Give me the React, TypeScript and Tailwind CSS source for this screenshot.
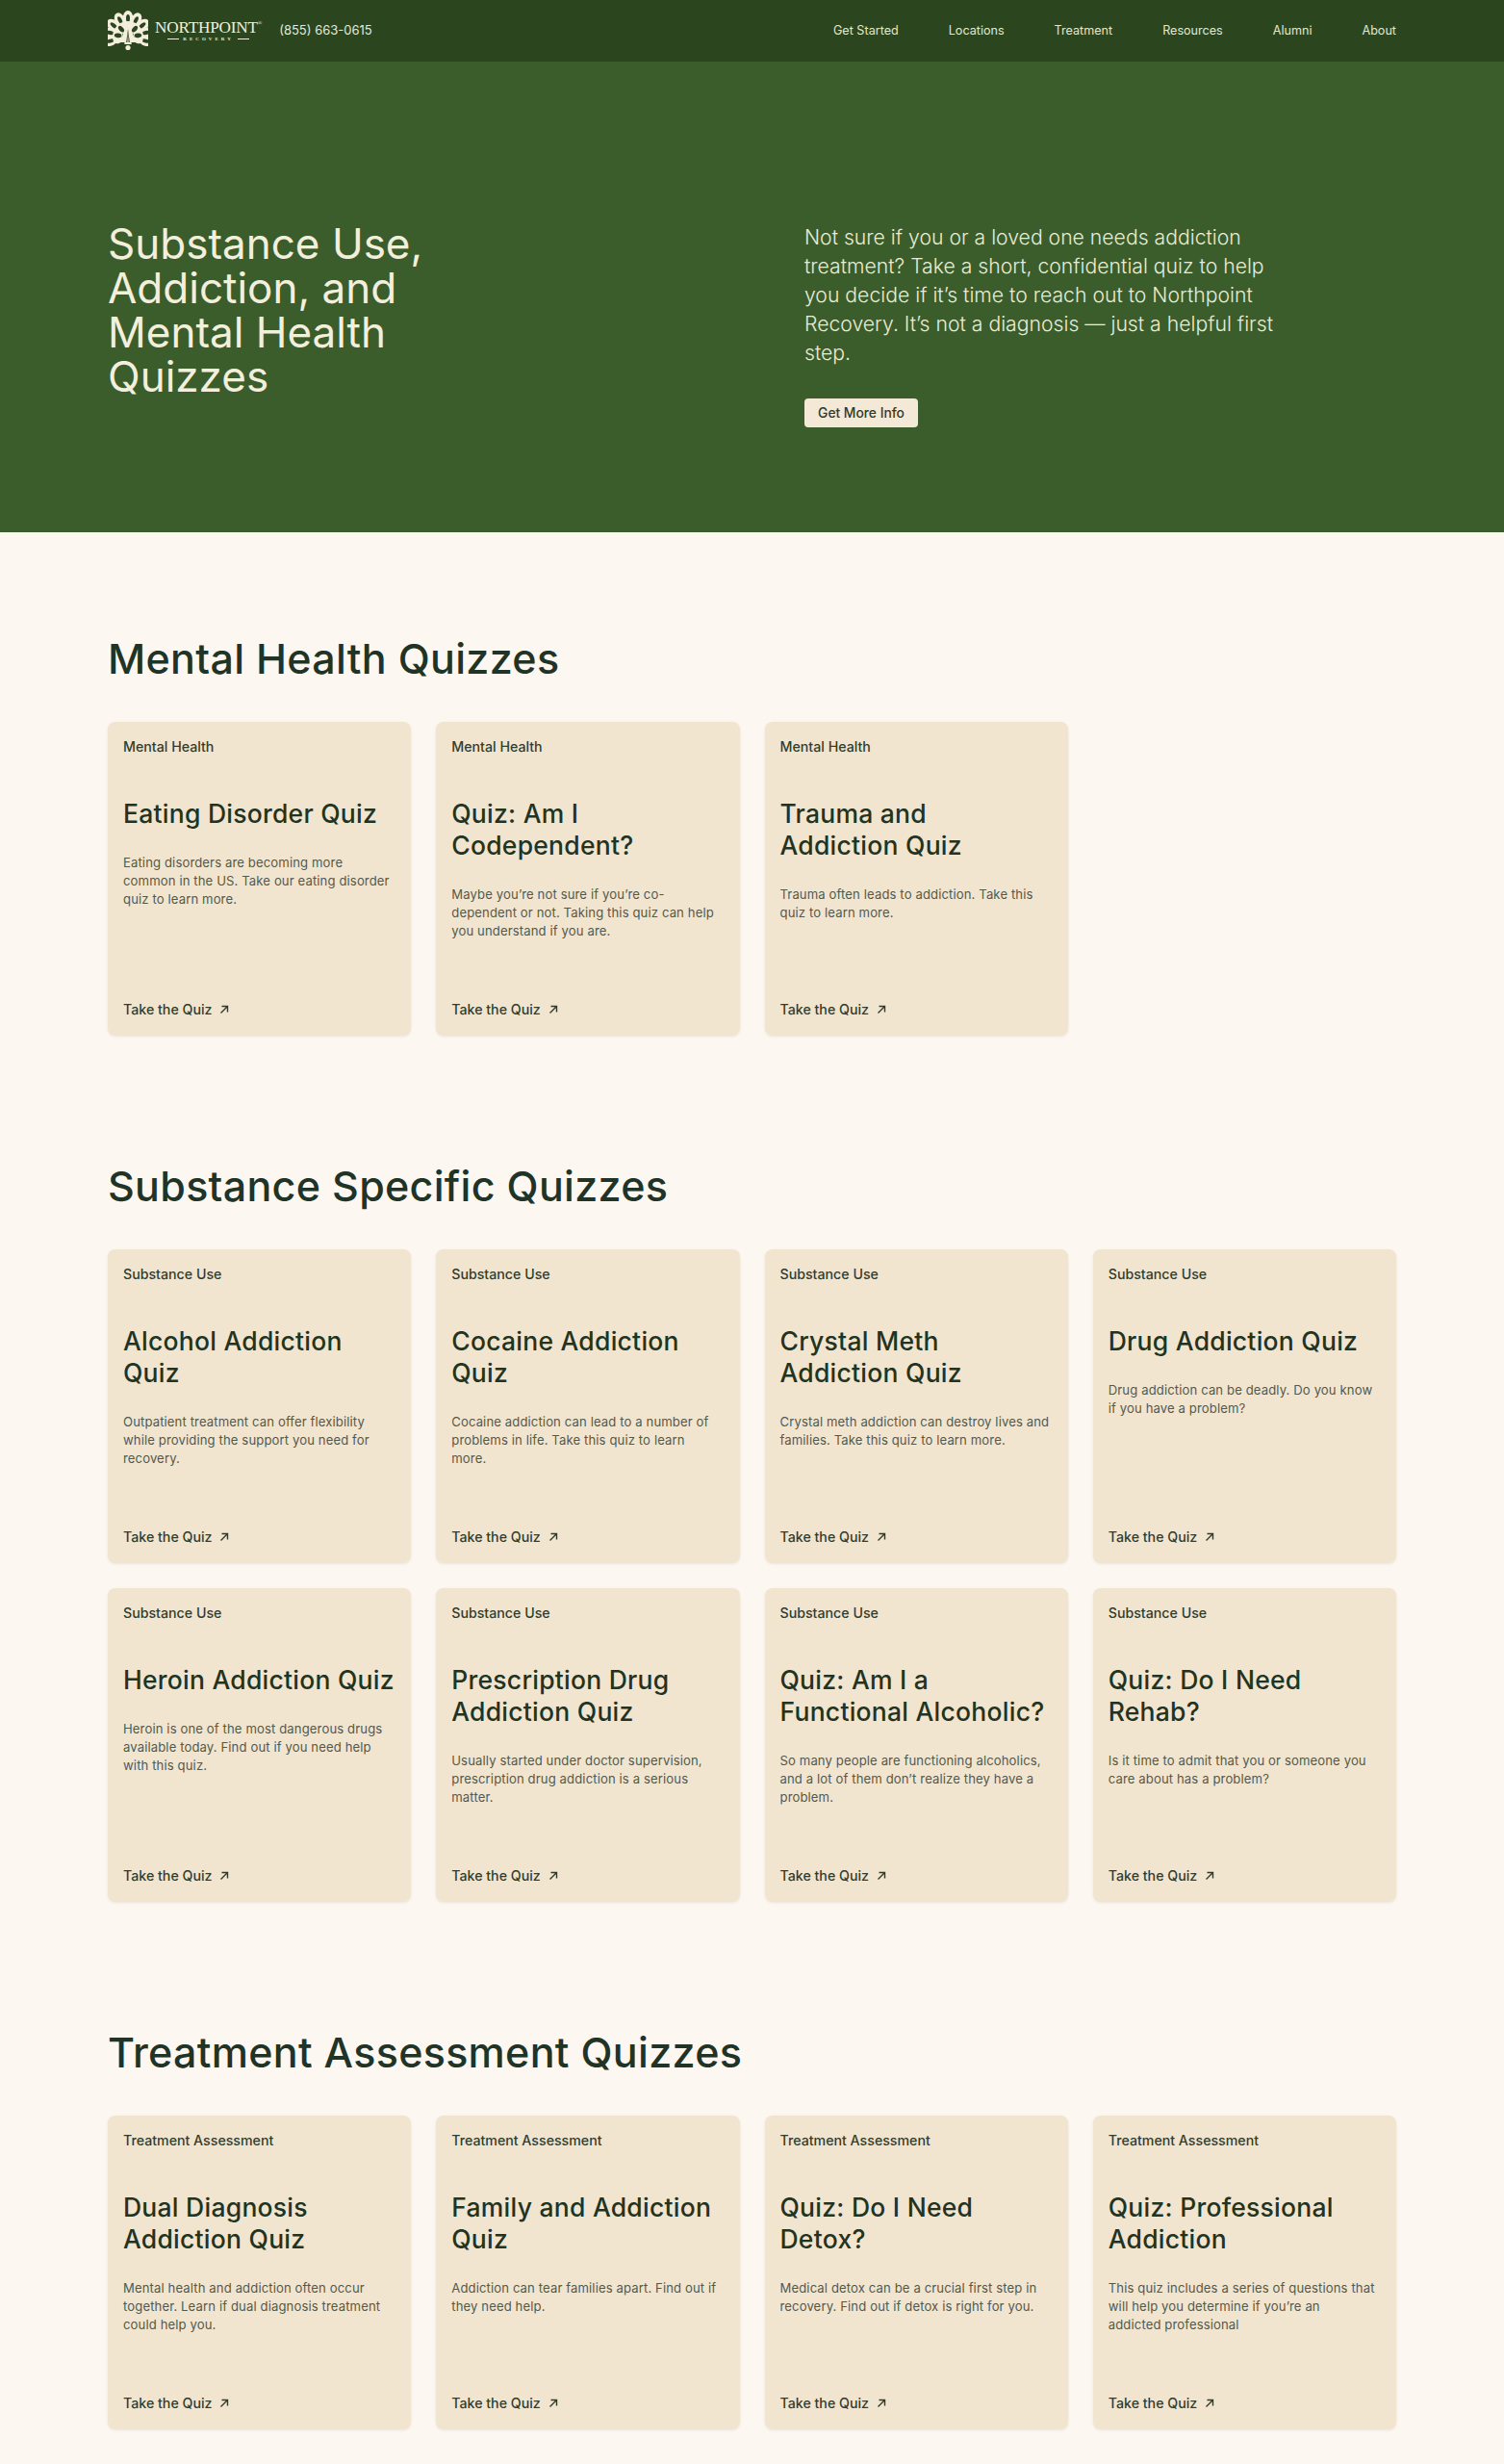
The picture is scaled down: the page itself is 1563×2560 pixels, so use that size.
const FONT = "font-['Inter','Open_Sans',sans-serif]";

type Card = { title: string; desc: string };

const mental: Card[] = [
  { title: "Eating Disorder Quiz", desc: "Eating disorders are becoming more\ncommon in the US. Take our eating disorder\nquiz to learn more." },
  { title: "Quiz: Am I Codependent?", desc: "Maybe you’re not sure if you’re co-\ndependent or not. Taking this quiz can help\nyou understand if you are." },
  { title: "Trauma and\nAddiction Quiz", desc: "Trauma often leads to addiction. Take this\nquiz to learn more." },
];
const substance: Card[] = [
  { title: "Alcohol Addiction Quiz", desc: "Outpatient treatment can offer flexibility\nwhile providing the support you need for\nrecovery." },
  { title: "Cocaine Addiction Quiz", desc: "Cocaine addiction can lead to a number of\nproblems in life. Take this quiz to learn\nmore." },
  { title: "Crystal Meth Addiction Quiz", desc: "Crystal meth addiction can destroy lives and\nfamilies. Take this quiz to learn more." },
  { title: "Drug Addiction Quiz", desc: "Drug addiction can be deadly. Do you know\nif you have a problem?" },
  { title: "Heroin Addiction Quiz", desc: "Heroin is one of the most dangerous drugs\navailable today. Find out if you need help\nwith this quiz." },
  { title: "Prescription Drug Addiction Quiz", desc: "Usually started under doctor supervision,\nprescription drug addiction is a serious\nmatter." },
  { title: "Quiz: Am I a Functional Alcoholic?", desc: "So many people are functioning alcoholics,\nand a lot of them don’t realize they have a\nproblem." },
  { title: "Quiz: Do I Need Rehab?", desc: "Is it time to admit that you or someone you\ncare about has a problem?" },
];
const treatment: Card[] = [
  { title: "Dual Diagnosis Addiction Quiz", desc: "Mental health and addiction often occur\ntogether. Learn if dual diagnosis treatment\ncould help you." },
  { title: "Family and Addiction Quiz", desc: "Addiction can tear families apart. Find out if\nthey need help." },
  { title: "Quiz: Do I Need Detox?", desc: "Medical detox can be a crucial first step in\nrecovery. Find out if detox is right for you." },
  { title: "Quiz: Professional Addiction", desc: "This quiz includes a series of questions that\nwill help you determine if you’re an\naddicted professional" },
];

function Logo() {
  const outer = [-104, -78, -52, -26, 0, 26, 52, 78, 104];
  const inner = [-84, -42, 42, 84];
  return (
    <svg width="42" height="42" viewBox="0 0 42 42" className="shrink-0">
      <path d="M21 8 L29 33 L13 33 Z" fill="#f4eedd" />
      {outer.map((a) => (
        <g key={a} transform={`rotate(${a} 21 27)`}>
          <ellipse cx="21" cy="7.5" rx="5.2" ry="7.5" fill="#f4eedd" />
          <ellipse cx="21" cy="8" rx="2" ry="4" fill="#2b461f" />
          <ellipse cx="21" cy="16" rx="4.6" ry="5" fill="#f4eedd" />
        </g>
      ))}
      {inner.map((a) => (
        <g key={a} transform={`rotate(${a} 21 27)`}>
          <ellipse cx="21" cy="16.5" rx="2.3" ry="3.8" fill="#2b461f" />
        </g>
      ))}
      <path d="M21 15 L24.8 35 L17.2 35 Z" fill="#f4eedd" />
      <path d="M21 19 L22.8 33 L19.2 33 Z" fill="#2b461f" />
      <path d="M21 22 L21.6 33 L20.4 33 Z" fill="#f4eedd" />
      <circle cx="21" cy="38.5" r="2.6" fill="#f4eedd" />
    </svg>
  );
}

function Arrow() {
  return (
    <svg width="12" height="12" viewBox="0 0 12 12" fill="none" stroke="#2f3a2b" strokeWidth="1.4" className="ml-[7px]">
      <path d="M2.5 9.5 L9.5 2.5 M3.5 2.5 H9.5 V8.5" />
    </svg>
  );
}

function QuizCard({ tag, card }: { tag: string; card: Card }) {
  return (
    <div className="flex h-[326px] flex-col rounded-lg bg-[#f1e5d0] px-4 pt-[17px] pb-[17px] shadow-[0_1px_3px_rgba(120,100,70,0.12)]">
      <div className="text-[14.2px] leading-[18px] font-medium text-[#323d2e]">{tag}</div>
      <h3 className="mt-[44px] text-[26.5px] leading-[33px] font-medium tracking-[0.25px] whitespace-pre-line text-[#22331f]">{card.title}</h3>
      <p className="mt-[25px] text-[13.1px] leading-[19px] tracking-[0.12px] whitespace-pre text-[#55594a]">{card.desc}</p>
      <div className="mt-auto flex items-center text-[14.2px] leading-5 font-medium text-[#323d2e]">
        Take the Quiz
        <Arrow />
      </div>
    </div>
  );
}

function Section({ title, tag, cards, className }: { title: string; tag: string; cards: Card[]; className: string }) {
  return (
    <section className={className}>
      <h2 className="text-[43px] leading-[52px] font-medium tracking-[0.3px] text-[#1f3326]">{title}</h2>
      <div className="mt-[40px] grid grid-cols-4 gap-x-[26px] gap-y-[26px]">
        {cards.map((c) => (
          <QuizCard key={c.title} tag={tag} card={c} />
        ))}
      </div>
    </section>
  );
}

export default function App() {
  return (
    <div className={`${FONT} min-h-[2560px] overflow-hidden bg-[#fcf7f1]`}>
      <header className="flex h-16 items-center justify-between bg-[#2b461f] px-[112px]">
        <div className="flex items-center">
          <Logo />
          <div className="ml-[7px] flex flex-col items-center font-['Liberation_Serif',serif] text-[#f1efdc]">
            <div className="flex items-start text-[17.2px] leading-[17px] tracking-[-0.2px]">
              NORTHPOINT<span className="text-[6px] leading-[8px]">®</span>
            </div>
            <div className="flex items-center gap-1 text-[5px] leading-[7px] font-bold tracking-[3px]">
              <span className="h-px w-3 bg-[#f1efdc]" />RECOVERY<span className="h-px w-3 bg-[#f1efdc]" />
            </div>
          </div>
          <div className="ml-[18px] text-[13px] text-[#e6e8d4]">(855) 663-0615</div>
        </div>
        <nav className="flex items-center gap-[52px] text-[12.6px] text-[#e1e6cf]">
          <span>Get Started</span>
          <span>Locations</span>
          <span>Treatment</span>
          <span>Resources</span>
          <span>Alumni</span>
          <span>About</span>
        </nav>
      </header>

      <div className="flex h-[489px] bg-[#3b5d2c] px-[112px] pt-[166px]">
        <h1 className="w-[724px] shrink-0 text-[44px] leading-[46px] text-[#f3efdc]">
          Substance Use,<br />Addiction, and<br />Mental Health<br />Quizzes
        </h1>
        <div className="mt-[1px] w-[510px]">
          <p className="text-[21.2px] leading-[30px] font-light text-[#e9ecd6]">
            Not sure if you or a loved one needs addiction treatment? Take a short, confidential quiz to help you decide if it’s time to reach out to Northpoint Recovery. It’s not a diagnosis — just a helpful first step.
          </p>
          <div className="mt-[33px] inline-flex h-[30px] w-[118px] items-center justify-center rounded bg-[#f3e9d6] text-[13.8px] font-medium text-[#2f3a2b]">
            Get More Info
          </div>
        </div>
      </div>

      <main className="px-[112px]">
        <Section className="pt-[105px]" title="Mental Health Quizzes" tag="Mental Health" cards={mental} />
        <Section className="pt-[130px]" title="Substance Specific Quizzes" tag="Substance Use" cards={substance} />
        <Section className="pt-[130px]" title="Treatment Assessment Quizzes" tag="Treatment Assessment" cards={treatment} />
      </main>
    </div>
  );
}
